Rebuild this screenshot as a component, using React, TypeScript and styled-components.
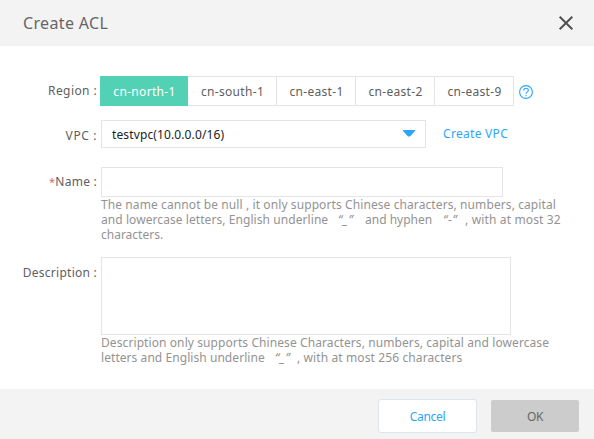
import React from 'react';
import styled, { createGlobalStyle } from 'styled-components';

const GlobalStyle = createGlobalStyle`
  * { box-sizing: border-box; }
  body { margin: 0; background: #fff; overflow: hidden; }
  button, input, textarea { font: inherit; margin: 0; padding: 0; }
`;

const Dialog = styled.div`
  display: flex;
  flex-direction: column;
  width: 594px;
  height: 439px;
  background: #fff;
  color: #5e5e5e;
  font: 12px/16px "Noto Sans", sans-serif;
`;

const Header = styled.header`
  display: flex;
  align-items: center;
  justify-content: space-between;
  flex: none;
  height: 46px;
  padding: 0 20px 0 23px;
  background: #f3f3f3;
`;

const Title = styled.h1`
  margin: 0;
  font-size: 16px;
  font-weight: 400;
  line-height: 22px;
  letter-spacing: 0.35px;
  color: #666;
`;

const CloseButton = styled.button`
  display: flex;
  margin-top: -1px;
  border: 0;
  background: none;
  svg { display: block; }
`;

const Form = styled.main`
  display: flex;
  flex-direction: column;
  flex: 1;
  padding-top: 30px;
`;

const Field = styled.div<{ $gap: number }>`
  display: flex;
  align-items: flex-start;
  margin-bottom: ${(p) => p.$gap}px;
`;

const Label = styled.label<{ $top: number; $tracking?: number }>`
  flex: none;
  width: 101px;
  padding: ${(p) => p.$top}px 4px 0 0;
  text-align: right;
  white-space: pre;
  letter-spacing: ${(p) => p.$tracking ?? 0.25}px;
`;

const Required = styled.span`
  color: #dc6a6a;
  font-size: 11px;
`;

const RegionGroup = styled.div`
  display: flex;
  height: 30px;
  margin-left: -1px;
`;

const RegionButton = styled.button<{ $width: number; $active?: boolean }>`
  width: ${(p) => p.$width}px;
  padding: 2px 0 0 1px;
  border: 1px solid ${(p) => (p.$active ? '#52d1b5' : '#e4e4e4')};
  border-left-width: ${(p) => (p.$active ? 1 : 0)}px;
  background: ${(p) => (p.$active ? '#52d1b5' : '#fff')};
  color: ${(p) => (p.$active ? '#fff' : '#5e5e5e')};
  letter-spacing: 0.32px;
  white-space: nowrap;
`;

const Help = styled.span`
  display: flex;
  margin: 9px 0 0 5px;
`;

const Select = styled.div`
  display: flex;
  align-items: center;
  justify-content: space-between;
  width: 325px;
  height: 28px;
  padding: 2px 10px 0 10px;
  border: 1px solid #e4e4e4;
  color: #222;
  letter-spacing: 0.12px;
  svg { display: block; margin-top: -4px; }
`;

const Link = styled.a`
  margin: 6px 0 0 17px;
  color: #2ca6fa;
  letter-spacing: 0.3px;
`;

const Control = styled.div`
  display: flex;
  flex-direction: column;
`;

const NameInput = styled.input`
  width: 402px;
  height: 30px;
  border: 1px solid #e4e4e4;
  outline: 0;
`;

const DescriptionInput = styled.textarea`
  display: block;
  width: 410px;
  height: 78px;
  border: 1px solid #e4e4e4;
  outline: 0;
  resize: none;
`;

const HintLine = styled.div`
  display: flex;
  height: 15px;
  line-height: 15px;
  white-space: pre;
  color: #939393;
`;

const Phrase = styled.span<{ $tracking?: number; $width?: number }>`
  flex: none;
  width: ${(p) => (p.$width ? `${p.$width}px` : 'auto')};
  letter-spacing: ${(p) => p.$tracking ?? 0}px;
`;

const Quoted = styled.span<{ $width: number }>`
  flex: none;
  width: ${(p) => p.$width}px;
  padding-left: 10px;
  font-style: italic;
  letter-spacing: 0.7px;
`;

const Footer = styled.footer`
  display: flex;
  align-items: flex-start;
  justify-content: flex-end;
  flex: none;
  gap: 14px;
  height: 50px;
  padding: 10px 15px 0 0;
  background: #f3f3f3;
`;

const CancelButton = styled.button`
  width: 99px;
  height: 34px;
  padding-top: 2px;
  border: 1px solid #dce4ec;
  border-radius: 3px;
  background: #fff;
  color: #2ca6fa;
  letter-spacing: -0.3px;
`;

const OkButton = styled.button`
  width: 88px;
  height: 32px;
  margin-top: 1px;
  padding-top: 2px;
  border: 0;
  border-radius: 2px;
  background: #ccc;
  color: #666;
  letter-spacing: -0.3px;
`;

const regions = [
  { name: 'cn-north-1', width: 88 },
  { name: 'cn-south-1', width: 89 },
  { name: 'cn-east-1', width: 79 },
  { name: 'cn-east-2', width: 79 },
  { name: 'cn-east-9', width: 79 },
];

export default function App() {
  return (
    <>
      <GlobalStyle />
      <Dialog>
        <Header>
          <Title>Create ACL</Title>
          <CloseButton aria-label="Close">
            <svg width="16" height="16" viewBox="0 0 16 16" fill="none" stroke="#505050" strokeWidth="2">
              <path d="M1.7 1.7 14.3 14.3M14.3 1.7 1.7 14.3" />
            </svg>
          </CloseButton>
        </Header>
        <Form>
          <Field $gap={14}>
            <Label $top={7} $tracking={0.4}>Region :</Label>
            <RegionGroup>
              {regions.map((r, i) => (
                <RegionButton key={r.name} $width={r.width} $active={i === 0}>{r.name}</RegionButton>
              ))}
            </RegionGroup>
            <Help>
              <svg width="14" height="14" viewBox="0 0 14 14" fill="none" stroke="#2ca6fa" strokeWidth="1.1">
                <circle cx="7" cy="7" r="6.4" />
                <path d="M4.6 5.5C4.6 4 5.5 3.2 7 3.2S9.4 4 9.4 5.3C9.4 6.9 7 7 7 9M7 10V11.3" />
              </svg>
            </Help>
          </Field>
          <Field $gap={19}>
            <Label $top={8} $tracking={0.6}>VPC :</Label>
            <Select>
              testvpc(10.0.0.0/16)
              <svg width="12" height="7" viewBox="0 0 12 7">
                <path d="M0 0H12V1L7 6.5H5L0 1Z" fill="#2ca6fa" />
              </svg>
            </Select>
            <Link>Create VPC</Link>
          </Field>
          <Field $gap={15}>
            <Label $top={7}><Required>*</Required>Name :</Label>
            <Control>
              <NameInput aria-label="Name" />
              <HintLine>
                <Phrase $tracking={0.095}>The name cannot be null , it only supports Chinese characters, numbers, capital</Phrase>
              </HintLine>
              <HintLine>
                <Phrase $tracking={0.07} $width={227}>and lowercase letters, English underline</Phrase>
                <Quoted $width={37}>“_”</Quoted>
                <Phrase $width={68}>and hyphen</Phrase>
                <Quoted $width={32}>“-”</Quoted>
                <Phrase $tracking={0.15}>, with at most 32</Phrase>
              </HintLine>
              <HintLine><Phrase>characters.</Phrase></HintLine>
            </Control>
          </Field>
          <Field $gap={0}>
            <Label $top={8}>Description :</Label>
            <Control>
              <DescriptionInput aria-label="Description" />
              <HintLine>
                <Phrase $tracking={0.09}>Description only supports Chinese Characters, numbers, capital and lowercase</Phrase>
              </HintLine>
              <HintLine>
                <Phrase $tracking={0.06} $width={164}>letters and English underline</Phrase>
                <Quoted $width={32}>“_”</Quoted>
                <Phrase $tracking={0.11}>, with at most 256 characters</Phrase>
              </HintLine>
            </Control>
          </Field>
        </Form>
        <Footer>
          <CancelButton>Cancel</CancelButton>
          <OkButton>OK</OkButton>
        </Footer>
      </Dialog>
    </>
  );
}
